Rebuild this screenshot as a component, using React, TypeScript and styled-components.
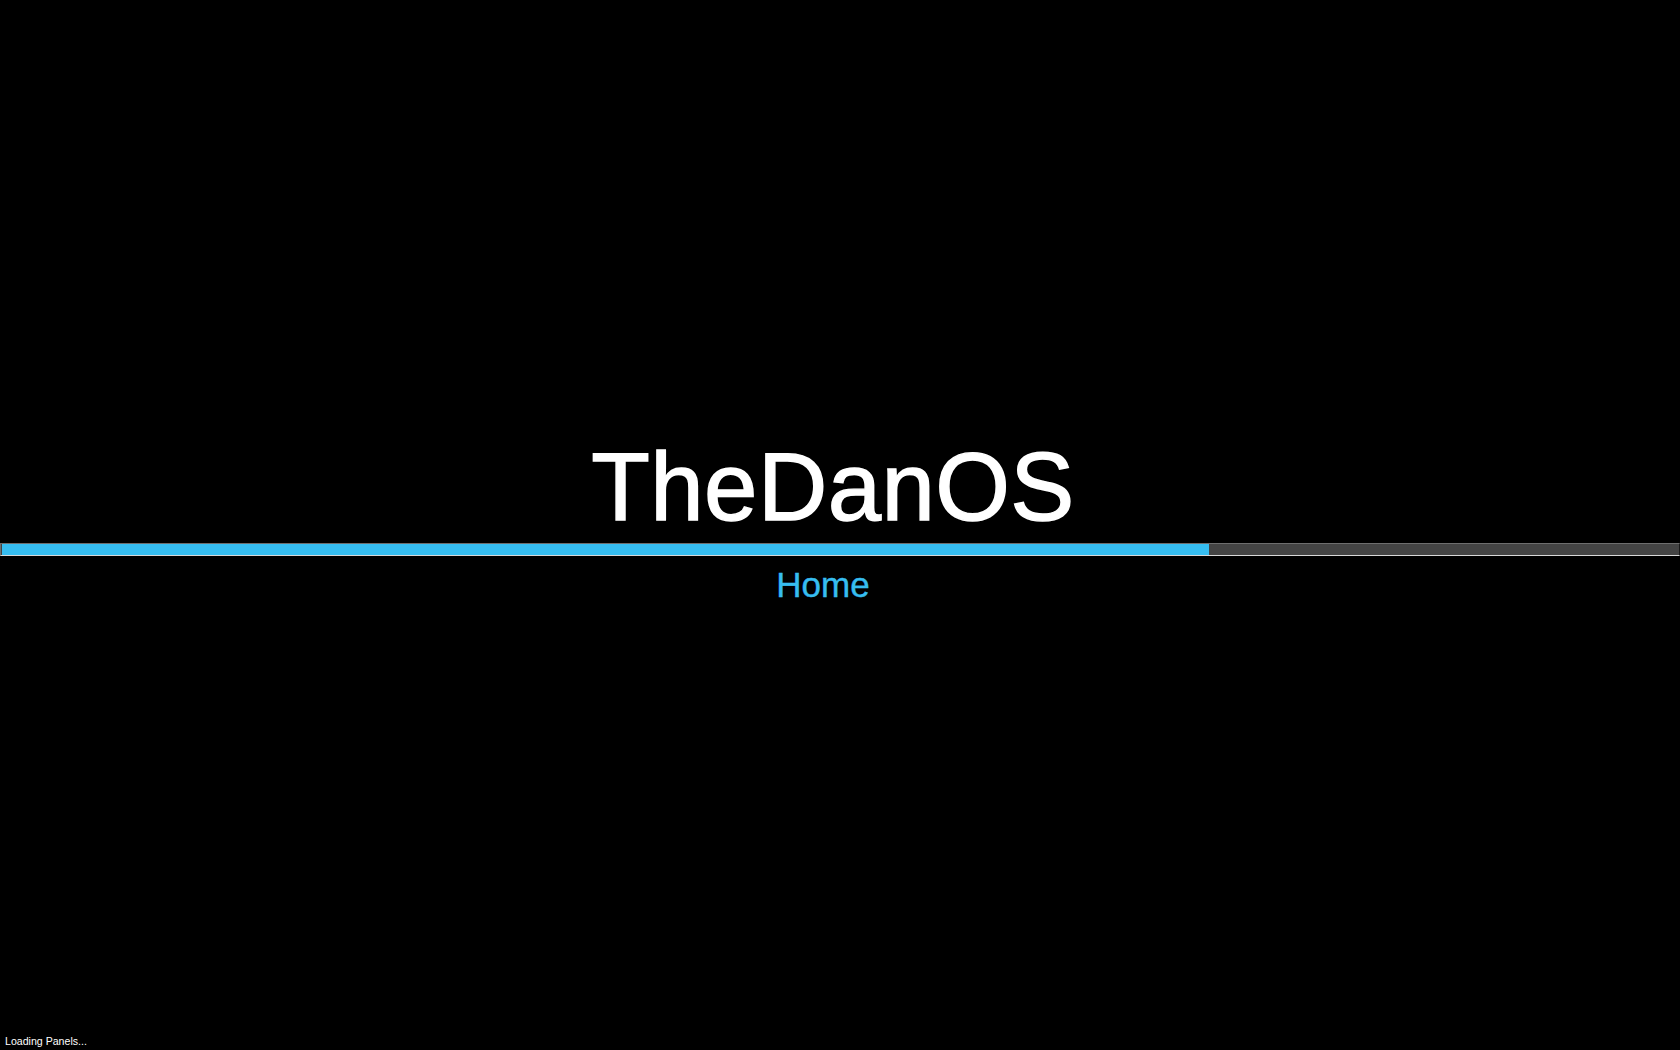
import React from "react";
import styled, { createGlobalStyle } from "styled-components";

const Global = createGlobalStyle`
  html, body { margin: 0; padding: 0; background: #000; }
  body { font-family: "Liberation Sans", Arial, sans-serif; overflow: hidden; }
  #root { min-height: 100vh; }
`;

const Screen = styled.div`
  min-height: 100vh;
  display: flex;
  flex-direction: column;
  background: #000;
  color: #fff;
`;

const Splash = styled.main`
  flex: 1;
  display: flex;
  flex-direction: column;
  align-items: stretch;
  padding-top: 439px;
`;

const Title = styled.h1`
  margin: 0;
  font-family: "Liberation Sans", Arial, sans-serif;
  font-weight: 400;
  font-size: 96px;
  line-height: 96px;
  text-align: center;
  color: #fff;
  -webkit-text-stroke: 1.4px #fff;
  letter-spacing: 0.4px;
  padding-right: 14px;
`;

const Track = styled.div`
  margin-top: 8px;
  height: 11px;
  background: #444444;
  border-top: 1px solid #6e6e6e;
  border-left: 1px solid #6e6e6e;
  border-bottom: 1px solid #d8d8d8;
  border-right: 1px solid #1a1a1a;
  display: flex;
`;

const Fill = styled.div`
  height: 100%;
  background: #36bdf0;
  margin-left: 1px;
`;

const Stage = styled.div`
  margin-top: 11px;
  font-family: "Liberation Sans", Arial, sans-serif;
  font-size: 35px;
  line-height: 35px;
  color: #36bdf0;
  -webkit-text-stroke: 0.4px #36bdf0;
  text-align: center;
  padding-right: 34px;
`;

const Status = styled.div`
  font-family: "Liberation Sans", Arial, sans-serif;
  font-size: 10.6px;
  line-height: 11px;
  color: #fff;
  padding: 0 0 3px 5px;
`;

export default function App() {
  const progress = 1207;
  return (
    <>
      <Global />
      <Screen>
        <Splash>
          <Title>TheDanOS</Title>
          <Track>
            <Fill style={{ width: progress }} />
          </Track>
          <Stage>Home</Stage>
        </Splash>
        <Status>Loading Panels...</Status>
      </Screen>
    </>
  );
}
